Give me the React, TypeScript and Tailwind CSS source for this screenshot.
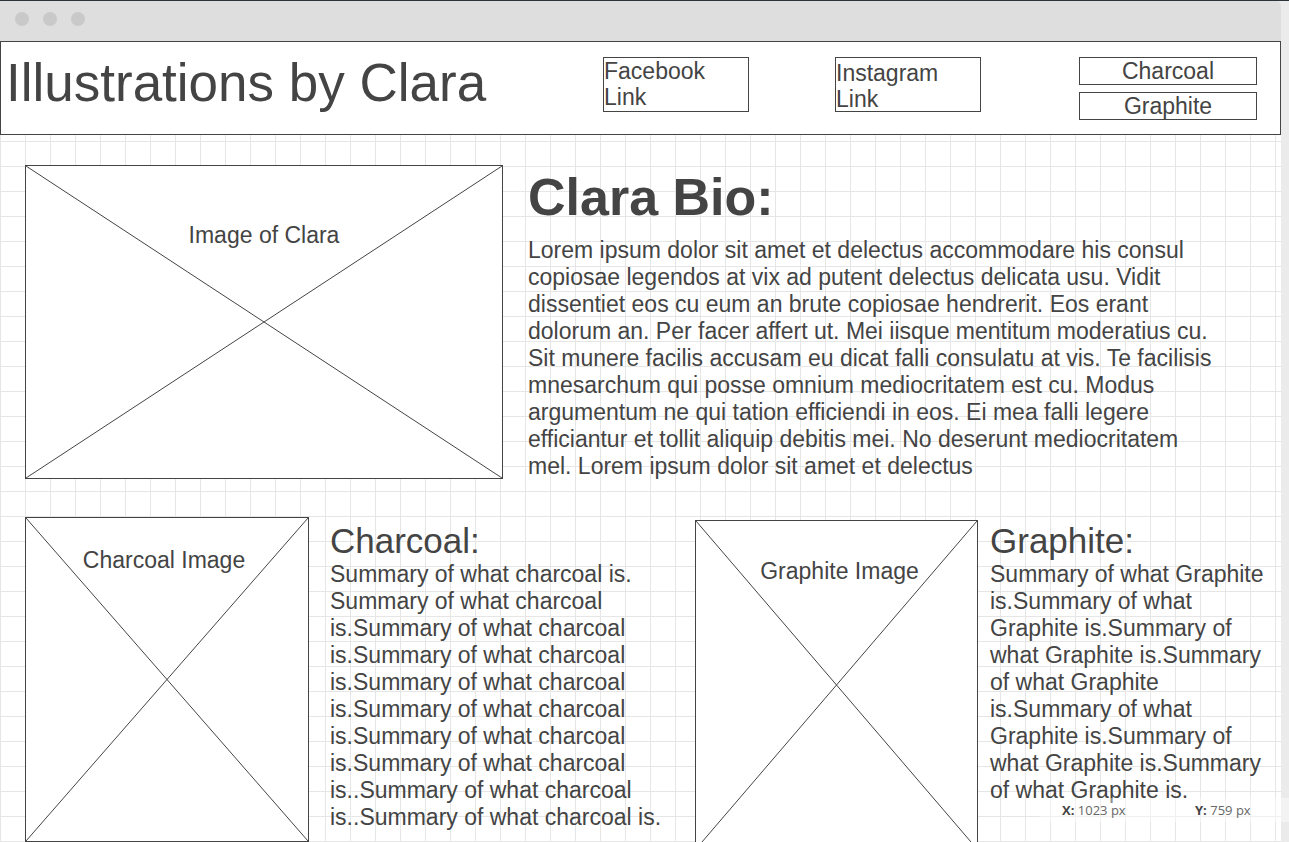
import React from "react";

// wireframe d'une page portfolio, rendu façon maquette dans une fenêtre de navigateur

const bio =
  "Lorem ipsum dolor sit amet et delectus accommodare his consul copiosae legendos at vix ad putent delectus delicata usu. Vidit dissentiet eos cu eum an brute copiosae hendrerit. Eos erant dolorum an. Per facer affert ut. Mei iisque mentitum moderatius cu. Sit munere facilis accusam eu dicat falli consulatu at vis. Te facilisis mnesarchum qui posse omnium mediocritatem est cu. Modus argumentum ne qui tation efficiendi in eos. Ei mea falli legere efficiantur et tollit aliquip debitis mei. No deserunt mediocritatem mel. Lorem ipsum dolor sit amet et delectus";

const charcoal =
  "Summary of what charcoal is. Summary of what charcoal is.Summary of what charcoal is.Summary of what charcoal is.Summary of what charcoal is.Summary of what charcoal is.Summary of what charcoal is.Summary of what charcoal is..Summary of what charcoal is..Summary of what charcoal is.";

const graphite =
  "Summary of what Graphite is.Summary of what Graphite is.Summary of what Graphite is.Summary of what Graphite is.Summary of what Graphite is.Summary of what Graphite is.Summary of what Graphite is.";

function Cross() {
  return (
    <svg className="absolute inset-0 h-full w-full" preserveAspectRatio="none" viewBox="0 0 100 100">
      <line x1="0" y1="0" x2="100" y2="100" stroke="#444" strokeWidth="1" vectorEffect="non-scaling-stroke" />
      <line x1="100" y1="0" x2="0" y2="100" stroke="#444" strokeWidth="1" vectorEffect="non-scaling-stroke" />
    </svg>
  );
}

function Placeholder({ label, className, labelClass }: { label: string; className: string; labelClass: string }) {
  return (
    <div className={`relative shrink-0 border border-[#444] bg-white ${className}`}>
      <Cross />
      <span className={`absolute text-center text-[23px] leading-[27px] ${labelClass}`}>{label}</span>
    </div>
  );
}

export default function App() {
  return (
    <div className="relative h-[842px] w-[1289px] overflow-hidden border-t border-[#2d333d] bg-[#ebebeb] font-['Liberation_Sans',Arial,sans-serif] text-[#444]">
      <div className="flex h-full w-[1281px] flex-col">
        {/* barre de fenêtre */}
        <div className="flex h-[40px] shrink-0 items-start gap-[14px] rounded-tr-[5px] bg-[#dedede] pl-[15px] pt-[11px]">
          <span className="h-[14px] w-[14px] rounded-full bg-[#c9c9c9]" />
          <span className="h-[14px] w-[14px] rounded-full bg-[#c9c9c9]" />
          <span className="h-[14px] w-[14px] rounded-full bg-[#c9c9c9]" />
        </div>

        <div className="flex-1 bg-white bg-[linear-gradient(to_right,#e6e6e6_1px,transparent_1px),linear-gradient(to_bottom,#e6e6e6_1px,transparent_1px)] bg-[size:25px_25px]">
          {/* en-tête */}
          <header className="flex h-[94px] w-[1281px] items-start border border-[#444] bg-white pt-[15px]">
            <h1 className="w-[602px] shrink-0 pl-[5px] text-[53px] leading-[52px]">Illustrations by Clara</h1>
            <div className="h-[55px] w-[146px] shrink-0 border border-[#444] text-[23px] leading-[26px]">
              Facebook
              <br />
              Link
            </div>
            <div className="ml-[86px] h-[55px] w-[146px] shrink-0 border border-[#444] pt-[2px] text-[23px] leading-[26px]">
              Instagram
              <br />
              Link
            </div>
            <div className="ml-[98px] flex flex-col gap-[7px]">
              <div className="h-[28px] w-[178px] border border-[#444] text-center text-[23px] leading-[26px]">Charcoal</div>
              <div className="h-[28px] w-[178px] border border-[#444] text-center text-[23px] leading-[26px]">Graphite</div>
            </div>
          </header>

          <main className="pl-[25px] pt-[30px]">
            <section className="flex items-start">
              <Placeholder label="Image of Clara" className="h-[314px] w-[478px]" labelClass="left-0 right-0 top-[56px]" />
              <div className="ml-[25px] pt-[6px]">
                <h2 className="text-[52px] font-bold leading-[52px]">Clara Bio:</h2>
                <p className="mt-[14px] w-[694px] text-[23px] leading-[27px]">{bio}</p>
              </div>
            </section>

            <section className="mt-[37px] flex items-start">
              <Placeholder label="Charcoal Image" className="h-[325px] w-[284px]" labelClass="left-0 right-[6px] top-[29px]" />
              <div className="ml-[21px] w-[355px] shrink-0 pt-[6px]">
                <h3 className="text-[35px] leading-[36px]">Charcoal:</h3>
                <p className="mt-[2px] text-[23px] leading-[27px]">{charcoal}</p>
              </div>
              <Placeholder label="Graphite Image" className="ml-[10px] mt-[3px] h-[330px] w-[283px]" labelClass="left-[6px] right-0 top-[37px]" />
              <div className="ml-[12px] w-[280px] shrink-0 pt-[6px]">
                <h3 className="text-[35px] leading-[36px]">Graphite:</h3>
                <p className="mt-[2px] text-[23px] leading-[27px]">{graphite}</p>
              </div>
            </section>
          </main>
        </div>
      </div>

      {/* coordonnées du curseur */}
      <div className="absolute right-0 top-[797px] flex h-[24px] w-[249px] items-center bg-white/40 pl-[22px] font-['Open_Sans',sans-serif] text-[13px] leading-[16px] text-[#666]">
        <span className="w-[133px]">
          <b className="text-[#444]">X:</b> 1023 px
        </span>
        <span>
          <b className="text-[#444]">Y:</b> 759 px
        </span>
      </div>
    </div>
  );
}
